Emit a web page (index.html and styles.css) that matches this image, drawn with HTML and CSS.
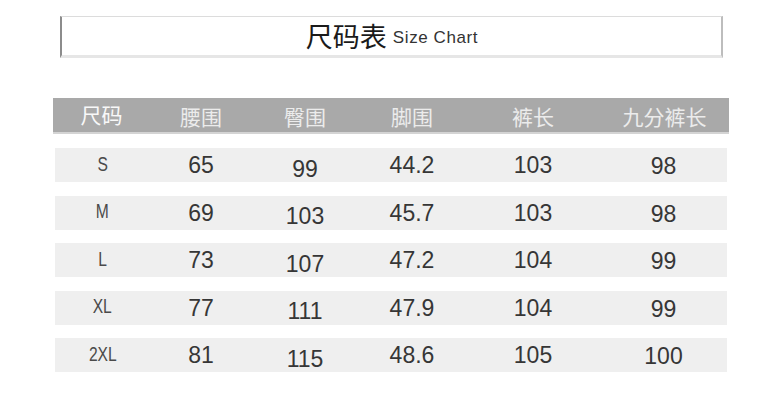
FILE: index.html
```html
<!DOCTYPE html>
<html lang="zh-CN">
<head>
<meta charset="utf-8">
<title>尺码表 Size Chart</title>
<link rel="stylesheet" href="styles.css">
</head>
<body>
<div class="page">
  <div class="title-box">
    <span class="title-cn">尺码表</span><span class="title-en">Size Chart</span>
  </div>
  <div class="table">
    <div class="head">
      <div class="hc first">尺码</div>
      <div class="hc">腰围</div>
      <div class="hc">臀围</div>
      <div class="hc">脚围</div>
      <div class="hc">裤长</div>
      <div class="hc">九分裤长</div>
    </div>
    <div class="rows">
      <div class="row"><div class="c size"><span>S</span></div><div class="c">65</div><div class="c low">99</div><div class="c">44.2</div><div class="c">103</div><div class="c low2">98</div></div>
      <div class="row"><div class="c size"><span>M</span></div><div class="c">69</div><div class="c low">103</div><div class="c">45.7</div><div class="c">103</div><div class="c low2">98</div></div>
      <div class="row"><div class="c size"><span>L</span></div><div class="c">73</div><div class="c low">107</div><div class="c">47.2</div><div class="c">104</div><div class="c low2">99</div></div>
      <div class="row"><div class="c size"><span>XL</span></div><div class="c">77</div><div class="c low">111</div><div class="c">47.9</div><div class="c">104</div><div class="c low2">99</div></div>
      <div class="row"><div class="c size"><span>2XL</span></div><div class="c">81</div><div class="c low">115</div><div class="c">48.6</div><div class="c">105</div><div class="c low2">100</div></div>
    </div>
  </div>
</div>
</body>
</html>
```

FILE: styles.css
```css
* { box-sizing: border-box; }
html, body { margin: 0; padding: 0; background: #ffffff; }
body {
  width: 776px;
  height: 413px;
  overflow: hidden;
  font-family: "Liberation Sans", "Noto Sans CJK SC", sans-serif;
}
.page {
  padding-top: 16px;
}
.title-box {
  margin-left: 60px;
  width: 663px;
  height: 42px;
  border-top: 1px solid #dcdcdc;
  border-left: 2px solid #8c8c8c;
  border-right: 2px solid #bdbdbd;
  border-bottom: 3px solid #e6e6e6;
  display: flex;
  align-items: center;
  justify-content: center;
  padding-left: 1px;
}
.title-cn {
  font-family: "Noto Sans CJK SC", sans-serif;
  font-size: 27px;
  color: #1a1a1a;
  line-height: 1;
  margin-top: -1px;
}
.title-en {
  font-family: "Liberation Sans", sans-serif;
  font-size: 17px;
  letter-spacing: 0.6px;
  color: #333;
  margin-left: 6px;
  line-height: 1;
  margin-top: 2px;
}
.table {
  margin-top: 40px;
  margin-left: 53px;
  width: 676px;
}
.head {
  display: grid;
  grid-template-columns: 97px 102px 106px 108px 134px 129px;
  height: 36px;
  background: #a9a9a9;
  border-bottom: 2px solid #d4d4d4;
}
.hc {
  display: flex;
  align-items: center;
  justify-content: center;
  font-family: "Noto Sans CJK SC", sans-serif;
  font-size: 21px;
  color: #ececec;
  line-height: 1;
  padding-top: 2px;
}
.hc.first { color: #f8f8f8; padding-top: 0; margin-top: -2px; }
.rows {
  margin-top: 14px;
  display: flex;
  flex-direction: column;
  gap: 13.5px;
}
.row {
  margin: 0 2px;
  height: 34px;
  background: #efefef;
  display: grid;
  grid-template-columns: 95px 102px 106px 108px 134px 127px;
}
.c {
  display: flex;
  align-items: center;
  justify-content: center;
  font-size: 23px;
  color: #363636;
  line-height: 1;
  padding-top: 1px;
}
.c.size {
  font-size: 20px;
  color: #4a4a4a;
  padding-top: 0;
  margin-top: -3px;
}
.c.size span { display: inline-block; transform: scaleX(0.78); }
.c.low { padding-top: 8px; }
.c.low2 { padding-top: 3px; }
```
